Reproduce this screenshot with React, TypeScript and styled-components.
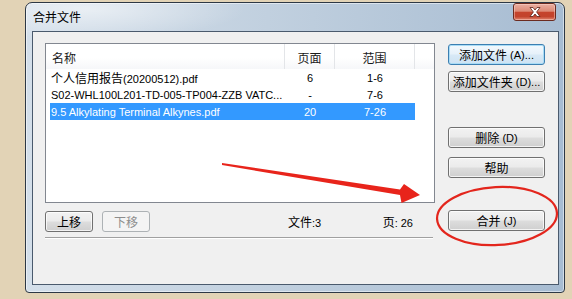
import React from "react";
import styled, { createGlobalStyle, css } from "styled-components";

type FileRow = {
  name: React.ReactNode;
  pages: string;
  range: string;
  selected?: boolean;
};

const GlobalStyle = createGlobalStyle`
  html, body {
    margin: 0;
    padding: 0;
  }
  body {
    background: #e2d3b6;
    font-family: "Liberation Sans", "Noto Sans CJK SC", sans-serif;
    font-size: 11px;
    color: #000;
  }
`;

const Page = styled.div`
  position: relative;
  width: 572px;
  height: 299px;
  box-sizing: border-box;
  padding: 2px 0 0 25px;
  background: #e2d3b6;
  overflow: hidden;
`;

const Window = styled.div`
  width: 540px;
  height: 291px;
  box-sizing: border-box;
  display: flex;
  flex-direction: column;
  padding: 0 5px 7px 6px;
  border: 1px solid #2d3845;
  border-radius: 7px 7px 4px 4px;
  background: radial-gradient(ellipse 160px 30px at 60px 6px, rgba(255, 255, 255, 0.55), rgba(255, 255, 255, 0)),
    linear-gradient(to right, #d4dfea 0%, #c1d0df 45%, #a7bcd2 100%);
  box-shadow: inset 0 0 0 1px rgba(255, 255, 255, 0.5);
`;

const TitleBar = styled.div`
  height: 28px;
  display: flex;
  align-items: flex-start;
`;

const Title = styled.span`
  padding-left: 1px;
  line-height: 28px;
  font-size: 12px;
  font-family: "Noto Sans CJK SC", sans-serif;
  color: #000;
`;

const CloseButton = styled.div`
  margin-left: auto;
  margin-right: 3px;
  width: 43px;
  height: 18px;
  box-sizing: border-box;
  display: flex;
  align-items: center;
  justify-content: center;
  border: 1px solid #6b2b20;
  border-radius: 3px;
  background: linear-gradient(#eab0a2 0%, #dc8a76 45%, #c5432c 52%, #c2432c 78%, #e08670 100%);
  box-shadow: inset 0 0 0 1px rgba(255, 220, 210, 0.45);
`;

const Client = styled.div`
  flex: 1;
  display: grid;
  grid-template-columns: 390px 97px;
  column-gap: 13px;
  align-items: start;
  padding: 11px 0 0 12px;
  border: 1px solid #4a5a6d;
  background: #f0f0f0;
`;

const LeftColumn = styled.div`
  display: flex;
  flex-direction: column;
`;

const ListBox = styled.div`
  width: 390px;
  height: 160px;
  box-sizing: border-box;
  border: 1px solid #828790;
  background: #fff;
`;

const Header = styled.div`
  display: flex;
  height: 25px;
  background: linear-gradient(#ffffff 0%, #ffffff 55%, #f6f7f9 100%);
`;

const HeaderCell = styled.div<{ $w: number; $center?: boolean }>`
  width: ${({ $w }) => $w}px;
  box-sizing: border-box;
  display: flex;
  align-items: center;
  justify-content: ${({ $center }) => ($center ? "center" : "flex-start")};
  padding: 2px 0 0 ${({ $center }) => ($center ? 0 : 6)}px;
  border-right: 1px solid #e3e5e8;
  color: #1a1a1a;
`;

const Row = styled.div<{ $selected?: boolean }>`
  display: grid;
  grid-template-columns: 235px 50px 80px;
  margin-left: 4px;
  width: 365px;
  height: 17px;
  align-items: center;
  white-space: nowrap;
  ${({ $selected }) =>
    $selected &&
    css`
      background: #3399ff;
      color: #fff;
    `}
`;

const NameCell = styled.span`
  padding-left: 1px;
  overflow: hidden;
`;

const NumCell = styled.span`
  text-align: center;
`;

const Han = styled.span`
  font-family: "Noto Sans CJK SC", sans-serif;
  font-size: 12px;
`;

const BottomBar = styled.div`
  display: flex;
  align-items: center;
  margin-top: 8px;
  height: 21px;
`;

const buttonBase = css`
  box-sizing: border-box;
  display: flex;
  align-items: center;
  justify-content: center;
  height: 21px;
  padding: 0;
  white-space: nowrap;
  font-family: "Liberation Sans", "Noto Sans CJK SC", sans-serif;
  font-size: 11px;
  color: #000;
  border: 1px solid #707070;
  border-radius: 3px;
  background: linear-gradient(#f2f2f2 0%, #ebebeb 48%, #dddddd 52%, #cfcfcf 100%);
  box-shadow: inset 0 0 0 1px rgba(255, 255, 255, 0.75);
`;

const SmallButton = styled.button<{ $disabled?: boolean }>`
  ${buttonBase};
  width: 48px;
  & + & {
    margin-left: 9px;
  }
  ${({ $disabled }) =>
    $disabled &&
    css`
      color: #8d8d8d;
      border-color: #adb2b5;
      background: #f4f4f4;
      box-shadow: none;
    `}
`;

const FileCount = styled.span`
  margin-left: 138px;
  width: 92px;
`;

const PageCount = styled.span`
  width: 33px;
  text-align: right;
`;

const Separator = styled.div`
  margin-top: 5px;
  width: 388px;
  height: 1px;
  background: #a0a0a0;
  border-bottom: 1px solid #fff;
`;

const RightColumn = styled.div`
  display: flex;
  flex-direction: column;
  padding-top: 1px;
`;

const ActionButton = styled.button<{ $mt: number; $default?: boolean }>`
  ${buttonBase};
  width: 97px;
  margin-top: ${({ $mt }) => $mt}px;
  overflow: visible;
  ${({ $default }) =>
    $default &&
    css`
      border-color: #3c7fb1;
      background: linear-gradient(#f3f9fd 0%, #e6f1fa 48%, #d8e9f6 52%, #cde2f3 100%);
      box-shadow: inset 0 0 0 1px #a9dcf6;
    `}
`;

const Overlay = styled.svg`
  position: absolute;
  left: 0;
  top: 0;
  width: 572px;
  height: 299px;
  pointer-events: none;
`;

const rows: FileRow[] = [
  { name: <><Han>个人信用报告</Han>(20200512).pdf</>, pages: "6", range: "1-6" },
  { name: "S02-WHL100L201-TD-005-TP004-ZZB VATC...", pages: "-", range: "7-6" },
  { name: "9.5 Alkylating Terminal Alkynes.pdf", pages: "20", range: "7-26", selected: true },
];

export default function App() {
  return (
    <Page>
      <GlobalStyle />
      <Window>
        <TitleBar>
          <Title>合并文件</Title>
          <CloseButton>
            <svg width="12" height="10" viewBox="0 0 12 10">
              <path
                d="M1 0.5 L4 0.5 L6 3 L8 0.5 L11 0.5 L7.6 5 L11 9.5 L8 9.5 L6 7 L4 9.5 L1 9.5 L4.4 5 Z"
                fill="#fff"
                stroke="#5a2118"
                strokeWidth="0.8"
                strokeLinejoin="round"
              />
            </svg>
          </CloseButton>
        </TitleBar>
        <Client>
          <LeftColumn>
            <ListBox>
              <Header>
                <HeaderCell $w={239}>
                  <Han>名称</Han>
                </HeaderCell>
                <HeaderCell $w={50} $center>
                  <Han>页面</Han>
                </HeaderCell>
                <HeaderCell $w={80} $center>
                  <Han>范围</Han>
                </HeaderCell>
              </Header>
              {rows.map((r, i) => (
                <Row key={i} $selected={r.selected}>
                  <NameCell>{r.name}</NameCell>
                  <NumCell>{r.pages}</NumCell>
                  <NumCell>{r.range}</NumCell>
                </Row>
              ))}
            </ListBox>
            <BottomBar>
              <SmallButton>
                <Han>上移</Han>
              </SmallButton>
              <SmallButton $disabled>
                <Han>下移</Han>
              </SmallButton>
              <FileCount>
                <Han>文件</Han>:3
              </FileCount>
              <PageCount>
                <Han>页</Han>: 26
              </PageCount>
            </BottomBar>
            <Separator />
          </LeftColumn>
          <RightColumn>
            <ActionButton $mt={0} $default>
              <Han>添加文件</Han>&nbsp;(A)...
            </ActionButton>
            <ActionButton $mt={6}>
              <Han>添加文件夹</Han>&nbsp;(D)...
            </ActionButton>
            <ActionButton $mt={35}>
              <Han>删除</Han>&nbsp;(D)
            </ActionButton>
            <ActionButton $mt={9}>
              <Han>帮助</Han>
            </ActionButton>
            <ActionButton $mt={32}>
              <Han>合并</Han>&nbsp;(J)
            </ActionButton>
          </RightColumn>
        </Client>
      </Window>
      <Overlay viewBox="0 0 572 299">
        <polygon
          points="222,163 400,189.5 404,184 420,195 401.5,203 400,195 222,165"
          fill="#e8241b"
        />
        <ellipse
          cx="497"
          cy="216"
          rx="60"
          ry="29"
          transform="rotate(-3 497 216)"
          fill="none"
          stroke="#e3261d"
          strokeWidth="2.2"
        />
      </Overlay>
    </Page>
  );
}
